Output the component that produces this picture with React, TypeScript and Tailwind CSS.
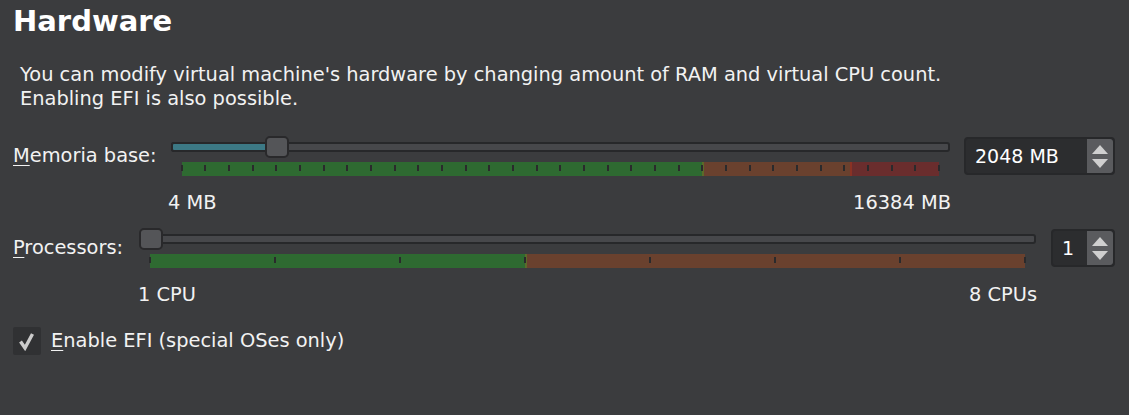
import React from "react";

type Segment = { to: number; color: string; edge?: string };

const font = { fontFamily: '"DejaVu Sans", Tahoma, sans-serif' };

const Scale = ({ ticks, segments }: { ticks: number; segments: Segment[] }) => {
  let from = 0;
  return (
    <div className="relative mx-[11px] mt-[4px] h-[14px]">
      {segments.map((s, i) => {
        const el = (
          <div
            key={i}
            className="absolute top-0 bottom-0"
            style={{ left: `${from}%`, width: `${s.to - from}%`, background: s.color }}
          >
            {s.edge && <div className="absolute top-0 bottom-0 left-0 w-[2px]" style={{ background: s.edge }} />}
          </div>
        );
        from = s.to;
        return el;
      })}
      {Array.from({ length: ticks + 1 }).map((_, i) => (
        <div
          key={i}
          className="absolute top-[3px] h-[6px] w-[2px] bg-[#2a2a2c]"
          style={{ left: `calc(${(i / ticks) * 100}% - 1px)` }}
        />
      ))}
    </div>
  );
};

const Slider = ({ pct, ticks, segments, fill }: { pct: number; ticks: number; segments: Segment[]; fill: boolean }) => (
  <div className="flex flex-1 flex-col">
    <div className="relative h-[22px]">
      <div className="absolute left-0 right-0 top-[6px] h-[10px] rounded-[3px] border-2 border-[#27282a] bg-[#47484b]" />
      {fill && (
        <div
          className="absolute left-0 top-[6px] h-[10px] rounded-[3px] border-2 border-[#27282a] bg-[#3c7985]"
          style={{ width: `calc(${pct} * (100% - 24px) + 12px)` }}
        />
      )}
      <div
        className="absolute top-0 h-[22px] w-[24px] rounded-[5px] border-2 border-[#29292b] bg-[#545558]"
        style={{ left: `calc(${pct} * (100% - 24px))` }}
      />
    </div>
    <Scale ticks={ticks} segments={segments} />
  </div>
);

const Spin = ({ value, width }: { value: string; width: string }) => (
  <div className={`flex h-[38px] ${width} overflow-hidden rounded-[4px] border-2 border-[#27282a] bg-[#2c2d2f]`}>
    <div className="flex flex-1 items-center pl-[9px] text-[19px] text-white">{value}</div>
    <div className="flex w-[26px] flex-col items-center justify-center gap-[5px] rounded-r-[3px] bg-[#5a5b5e]">
      <svg width="16" height="9" viewBox="0 0 16 9">
        <path d="M8 0 L16 9 L0 9 Z" fill="#cfcfcf" />
      </svg>
      <svg width="16" height="9" viewBox="0 0 16 9">
        <path d="M0 0 L16 0 L8 9 Z" fill="#cfcfcf" />
      </svg>
    </div>
  </div>
);

export default function App() {
  return (
    <div className="h-[415px] w-full bg-[#3b3c3e] text-[#f2f2f2]" style={font}>
      <div className="px-[13px] pt-[1px]">
        <h1 className="text-[29px] font-bold leading-[40px] text-white">Hardware</h1>
        <div className="mt-[22px] pl-[7px] text-[19.4px] leading-[24px]">
          <p>You can modify virtual machine's hardware by changing amount of RAM and virtual CPU count.</p>
          <p>Enabling EFI is also possible.</p>
        </div>

        <div className="mt-[25px] mr-[1px] flex items-center gap-[14px] text-[19.4px]">
          <div>
            <span className="underline underline-offset-[3px]">M</span>emoria base:
          </div>
          <div className="flex flex-1 items-center gap-[14px]">
            <Slider
              pct={(2048 - 4) / (16384 - 4)}
              ticks={32}
              fill
              segments={[
                { to: 68.65, color: "#2e6a31" },
                { to: 88.2, color: "#6a412e", edge: "#5c6a2a" },
                { to: 100, color: "#6a2d2d", edge: "#8a3224" },
              ]}
            />
            <Spin value="2048 MB" width="w-[151px]" />
          </div>
        </div>
        <div className="flex pl-[155px] pr-[165px] pt-[15px] text-[19.4px] leading-[24px]">
          <div className="flex flex-1 justify-between">
            <span>4 MB</span>
            <span>16384 MB</span>
          </div>
        </div>

        <div className="mt-[13px] mr-[1px] flex items-center gap-[16px] text-[19.4px]">
          <div>
            <span className="underline underline-offset-[3px]">P</span>rocessors:
          </div>
          <div className="flex flex-1 items-center gap-[15px]">
            <Slider
              pct={0}
              ticks={7}
              fill={false}
              segments={[
                { to: 42.857, color: "#2e6a31" },
                { to: 100, color: "#6a412e", edge: "#5c6a2a" },
              ]}
            />
            <Spin value="1" width="w-[64px]" />
          </div>
        </div>
        <div className="flex pl-[125px] pr-[79px] pt-[15px] text-[19.4px] leading-[24px]">
          <div className="flex flex-1 justify-between">
            <span>1 CPU</span>
            <span>8 CPUs</span>
          </div>
        </div>

        <label className="mt-[19px] flex items-center gap-[10px] text-[19.4px]">
          <span className="flex h-[28px] w-[28px] items-center justify-center rounded-[2px] bg-[#303133]">
            <svg width="20" height="20" viewBox="0 0 20 20">
              <path d="M3.5 10.5 L8 17 L15.5 3" fill="none" stroke="#cbcbcb" strokeWidth="3.4" />
            </svg>
          </span>
          <span>
            <span className="underline underline-offset-[3px]">E</span>nable EFI (special OSes only)
          </span>
        </label>
      </div>
    </div>
  );
}
